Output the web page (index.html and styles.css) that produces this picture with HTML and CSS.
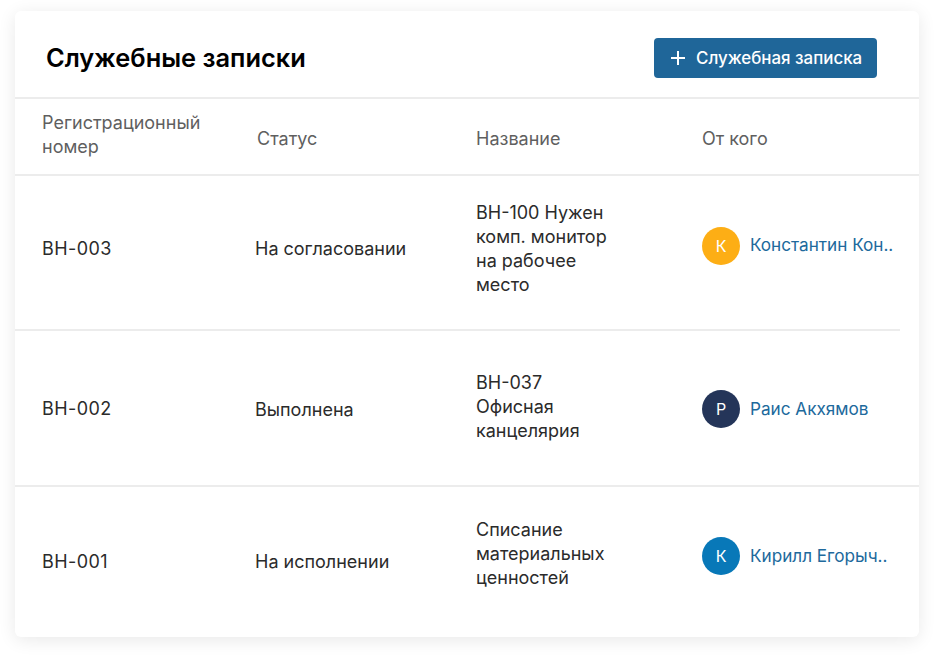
FILE: index.html
```html
<!DOCTYPE html>
<html lang="ru">
<head>
<meta charset="utf-8">
<title>Служебные записки</title>
<link rel="stylesheet" href="styles.css">
</head>
<body>
<main class="card">
  <header class="top">
    <h1 class="title">Служебные записки</h1>
    <button class="btn" type="button">
      <svg class="plus" width="16" height="16" viewBox="0 0 16 16"><path d="M8 1v14M1 8h14" stroke="#fff" stroke-width="2" fill="none"/></svg>
      <span>Служебная записка</span>
    </button>
  </header>
  <div class="row head">
    <div class="c1">Регистрационный<br>номер</div>
    <div class="c2">Статус</div>
    <div class="c3">Название</div>
    <div class="c4">От кого</div>
  </div>
  <div class="row r1">
    <div class="c1">ВН-003</div>
    <div class="c2">На согласовании</div>
    <div class="c3">ВН-100 Нужен комп. монитор на рабочее место</div>
    <div class="c4 person"><span class="ava orange">К</span><a class="name">Константин Кон..</a></div>
  </div>
  <div class="divider"></div>
  <div class="row r2">
    <div class="c1">ВН-002</div>
    <div class="c2">Выполнена</div>
    <div class="c3">ВН-037 Офисная канцелярия</div>
    <div class="c4 person"><span class="ava navy">Р</span><a class="name">Раис Акхямов</a></div>
  </div>
  <div class="row r3">
    <div class="c1">ВН-001</div>
    <div class="c2">На исполнении</div>
    <div class="c3">Списание материальных ценностей</div>
    <div class="c4 person"><span class="ava blue">К</span><a class="name">Кирилл Егорыч..</a></div>
  </div>
</main>
</body>
</html>
```
FILE: styles.css
```css
html, body { margin: 0; padding: 0; background: #fff; }
body { width: 934px; height: 655px; overflow: hidden; font-family: Inter, "Noto Sans", sans-serif; color: #2b2b2b; }
.card {
  box-sizing: border-box;
  width: 904px;
  height: 626px;
  margin: 11px 0 0 15px;
  background: #fff;
  border-radius: 6px;
  box-shadow: 0 3px 18px rgba(0, 0, 0, 0.09);
  overflow: hidden;
}
.top {
  box-sizing: border-box;
  height: 88px;
  display: flex;
  align-items: center;
  justify-content: space-between;
  padding: 8px 42px 0 31px;
  border-bottom: 2px solid #ececec;
}
.title { margin: 0; font-size: 25.4px; line-height: 32px; font-weight: 600; color: #000; }
.btn {
  width: 223px;
  height: 40px;
  padding: 0 0 0 16px;
  display: flex;
  align-items: center;
  gap: 10px;
  border: 0;
  border-radius: 4px;
  background: #1f6699;
  color: #fff;
  font: 500 16.9px/24px Inter, sans-serif;
  white-space: nowrap;
}
.plus { flex: none; }
.row {
  box-sizing: border-box;
  display: grid;
  grid-template-columns: 213px 221px 226px 1fr;
  padding-left: 27px;
  align-items: center;
  font-size: 18px;
  line-height: 24px;
}
.head { height: 77px; color: #5f5f5f; border-bottom: 2px solid #ececec; }
.head .c1 { margin-bottom: 4px; letter-spacing: 0; }
.head .c2 { padding-left: 2px; margin-top: 4px; }
.head .c3, .head .c4 { margin-top: 4px; }
.r1 { height: 153px; }
.divider { width: 885px; height: 2px; background: #ececec; }
.r2 { height: 156px; border-bottom: 2px solid #ececec; }
.r3 { height: 150px; }
.r1 .c1, .r2 .c1, .r3 .c1 { letter-spacing: 0.4px; }
.c3 { width: 140px; }
.person { display: flex; align-items: center; gap: 10px; }
.ava {
  flex: none;
  width: 38px;
  height: 38px;
  border-radius: 50%;
  display: flex;
  align-items: center;
  justify-content: center;
  color: #fff;
  font-size: 16px;
  font-weight: 400;
}
.orange { background: #fdae15; }
.navy { background: #243559; }
.blue { background: #0878b8; }
.name { color: #20699c; font-size: 17.15px; white-space: nowrap; }
.r1 .c1, .r1 .c2, .r1 .c3 { margin-bottom: 8px; }
.r1 .c4 { margin-bottom: 14px; }
.r1 .name { margin-bottom: 2px; }
.r2 .c1 { margin-top: 2px; }
.r2 .c2 { margin-top: 4px; }
.r2 .c3 { margin-bottom: 2px; }
.r2 .c4 { margin-top: 2px; }
.r3 .c3 { margin-bottom: 16px; }
.r3 .c4 { margin-bottom: 12px; }
```
